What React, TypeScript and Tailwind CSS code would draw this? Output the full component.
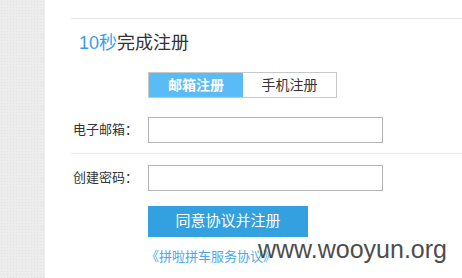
const font = { fontFamily: '"Liberation Sans", "Noto Sans CJK SC", sans-serif' };

const Field = ({ label }: { label: string }) => (
    <div className="flex items-center h-[26px]">
        <span className="w-[77px] text-[13px] text-[#333] pl-[2px]">{label}</span>
        <div className="w-[235px] h-[26px] border border-[#b5b5b5] bg-white"></div>
    </div>
);

export default function App() {
    return (
        <main className="w-[462px] h-[278px] flex overflow-hidden bg-white relative" style={font}>
            <div className="w-[45px] h-full bg-[#ececec] bg-[radial-gradient(#e2e2e2_1px,transparent_1px)] bg-[length:3px_3px]"></div>
            <div className="flex-1 pl-[26px] pt-[18px]">
                <div className="border-t border-[#e6e6e6]"></div>
                <h2 className="mt-[13px] ml-[8px] text-[18px] leading-[22px] text-[#333]">
                    <span className="text-[#3a9fe4]">10秒</span>完成注册
                </h2>
                <div className="flex ml-[77px] mt-[18px] h-[26px] w-[189px] border border-[#c8c8c8]">
                    <div className="w-[94px] bg-[#5abcf6] text-white text-[14px] font-bold flex items-center justify-center">邮箱注册</div>
                    <div className="flex-1 bg-white text-[#333] text-[14px] flex items-center justify-center">手机注册</div>
                </div>
                <div className="mt-[19px]">
                    <Field label="电子邮箱：" />
                </div>
                <div className="border-t border-[#ececec] mt-[10px]"></div>
                <div className="mt-[11px]">
                    <Field label="创建密码：" />
                </div>
                <button className="block ml-[77px] mt-[15px] w-[160px] h-[31px] bg-[#33a0e0] text-white text-[15px]">同意协议并注册</button>
                <a href="#" className="block ml-[75px] mt-[10px] text-[13px] text-[#4aa8ec]">《拼啦拼车服务协议》</a>
            </div>
            <div className="absolute left-[258px] top-[237px] text-[25px] leading-[25px] text-[#3a3a3a] opacity-90">
                www.wooyun.org
            </div>
        </main>
    );
}
